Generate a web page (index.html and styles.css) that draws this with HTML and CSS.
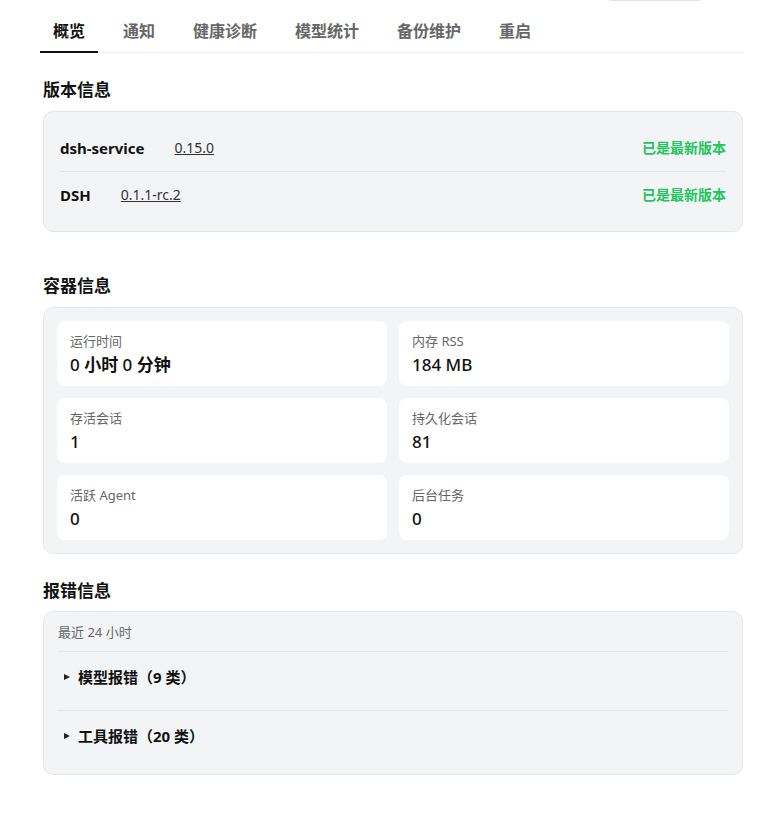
FILE: index.html
```html
<!DOCTYPE html>
<html lang="zh-CN">
<head>
    <meta charset="UTF-8">
    <meta name="viewport" content="width=device-width, initial-scale=1.0">
    <title>概览</title>
    <link rel="stylesheet" href="styles.css">
</head>
<body>
    <div class="page">
        <div class="topbar">
            <button class="top-btn" aria-label="刷新"></button>
        </div>

        <nav class="tabs">
            <a class="tab active">概览</a>
            <a class="tab">通知</a>
            <a class="tab">健康诊断</a>
            <a class="tab">模型统计</a>
            <a class="tab">备份维护</a>
            <a class="tab">重启</a>
        </nav>

        <section class="section section-version">
            <h2 class="section-title">版本信息</h2>
            <div class="card version-card">
                <div class="version-row">
                    <span class="version-name">dsh-service</span>
                    <a class="version-link">0.15.0</a>
                    <span class="version-status">已是最新版本</span>
                </div>
                <div class="version-row">
                    <span class="version-name">DSH</span>
                    <a class="version-link">0.1.1-rc.2</a>
                    <span class="version-status">已是最新版本</span>
                </div>
            </div>
        </section>

        <section class="section">
            <h2 class="section-title">容器信息</h2>
            <div class="card stats-card">
                <div class="stat">
                    <div class="stat-label">运行时间</div>
                    <div class="stat-value">0 <b>小时</b> 0 <b>分钟</b></div>
                </div>
                <div class="stat">
                    <div class="stat-label">内存 RSS</div>
                    <div class="stat-value">184 MB</div>
                </div>
                <div class="stat">
                    <div class="stat-label">存活会话</div>
                    <div class="stat-value">1</div>
                </div>
                <div class="stat">
                    <div class="stat-label">持久化会话</div>
                    <div class="stat-value">81</div>
                </div>
                <div class="stat">
                    <div class="stat-label">活跃 Agent</div>
                    <div class="stat-value">0</div>
                </div>
                <div class="stat">
                    <div class="stat-label">后台任务</div>
                    <div class="stat-value">0</div>
                </div>
            </div>
        </section>

        <section class="section section-errors">
            <h2 class="section-title">报错信息</h2>
            <div class="card errors-card">
                <div class="errors-caption">最近 24 小时</div>
                <details class="error-group">
                    <summary>模型报错（9 类）</summary>
                </details>
                <details class="error-group">
                    <summary>工具报错（20 类）</summary>
                </details>
            </div>
        </section>
    </div>
</body>
</html>
```

FILE: styles.css
```css
* {
    margin: 0;
    padding: 0;
    box-sizing: border-box;
}

body {
    font-family: 'Noto Sans', 'Noto Sans CJK SC', sans-serif;
    color: #111;
    background-color: #fff;
}

.page {
    width: 703px;
    margin-left: 40px;
}

.topbar {
    display: flex;
    justify-content: flex-end;
    height: 30px;
    margin-top: -29px;
    padding-right: 37px;
}

.top-btn {
    width: 102px;
    height: 30px;
    background-color: #fff;
    border: 1px solid #e2e2e2;
    border-radius: 8px;
}

.tabs {
    display: flex;
    gap: 12px;
    margin-top: 9px;
    border-bottom: 1px solid #efefef;
}

.tab {
    padding: 10px 13px 9px;
    font-size: 16px;
    line-height: 22px;
    font-weight: 600;
    color: #666;
    border-bottom: 2px solid transparent;
    margin-bottom: -1px;
    cursor: pointer;
}

.tab.active {
    color: #111;
    border-bottom-color: #111;
}

.section {
    margin-top: 25px;
}

.section-version {
    margin-bottom: 42px;
}

.section-version + .section {
    margin-top: 0;
}

.section-title {
    font-size: 17px;
    line-height: 24px;
    font-weight: 700;
    margin-left: 3px;
    margin-bottom: 9px;
}

.section-errors .section-title {
    margin-bottom: 8px;
}

.card {
    background-color: #f3f4f6;
    border: 1px solid #e5e7eb;
    border-radius: 10px;
    margin-left: 3px;
}

.version-card {
    padding: 13px 16px;
}

.version-row {
    display: flex;
    align-items: center;
    gap: 30px;
    padding: 12px 0;
    line-height: 22px;
}

.version-row + .version-row {
    border-top: 1px solid #e3e5e8;
}

.version-name {
    font-size: 15px;
    font-weight: 700;
}

.version-link {
    font-size: 14px;
    color: #333;
    text-decoration: underline;
    cursor: pointer;
}

.version-status {
    margin-left: auto;
    font-size: 14px;
    font-weight: 700;
    color: #22c55e;
}

.stats-card {
    display: grid;
    grid-template-columns: 1fr 1fr;
    gap: 12px;
    padding: 13px 13px;
}

.stat {
    background-color: #fff;
    border-radius: 8px;
    padding: 11px 13px 10px;
}

.stat-label {
    font-size: 13px;
    line-height: 18px;
    color: #666;
    margin-bottom: 4px;
}

.stat-value {
    font-size: 17px;
    line-height: 22px;
    font-weight: 500;
}

.stat-value b {
    font-weight: 700;
}

.errors-card {
    padding: 11px 14px 11px;
}

.errors-caption {
    font-size: 13px;
    line-height: 18px;
    color: #666;
    padding-bottom: 10px;
    border-bottom: 1px solid #e3e5e8;
}

.error-group {
    padding: 14px 6px 16px;
}

.error-group + .error-group {
    margin-top: 6px;
    border-top: 1px solid #e3e5e8;
}

.error-group summary {
    list-style: none;
    display: flex;
    align-items: center;
    gap: 8px;
    font-size: 15px;
    line-height: 22px;
    font-weight: 700;
    cursor: pointer;
}

.error-group summary::-webkit-details-marker {
    display: none;
}

.error-group summary::before {
    content: "";
    width: 0;
    height: 0;
    border-top: 3.5px solid transparent;
    border-bottom: 3.5px solid transparent;
    border-left: 6px solid #222;
}
```
